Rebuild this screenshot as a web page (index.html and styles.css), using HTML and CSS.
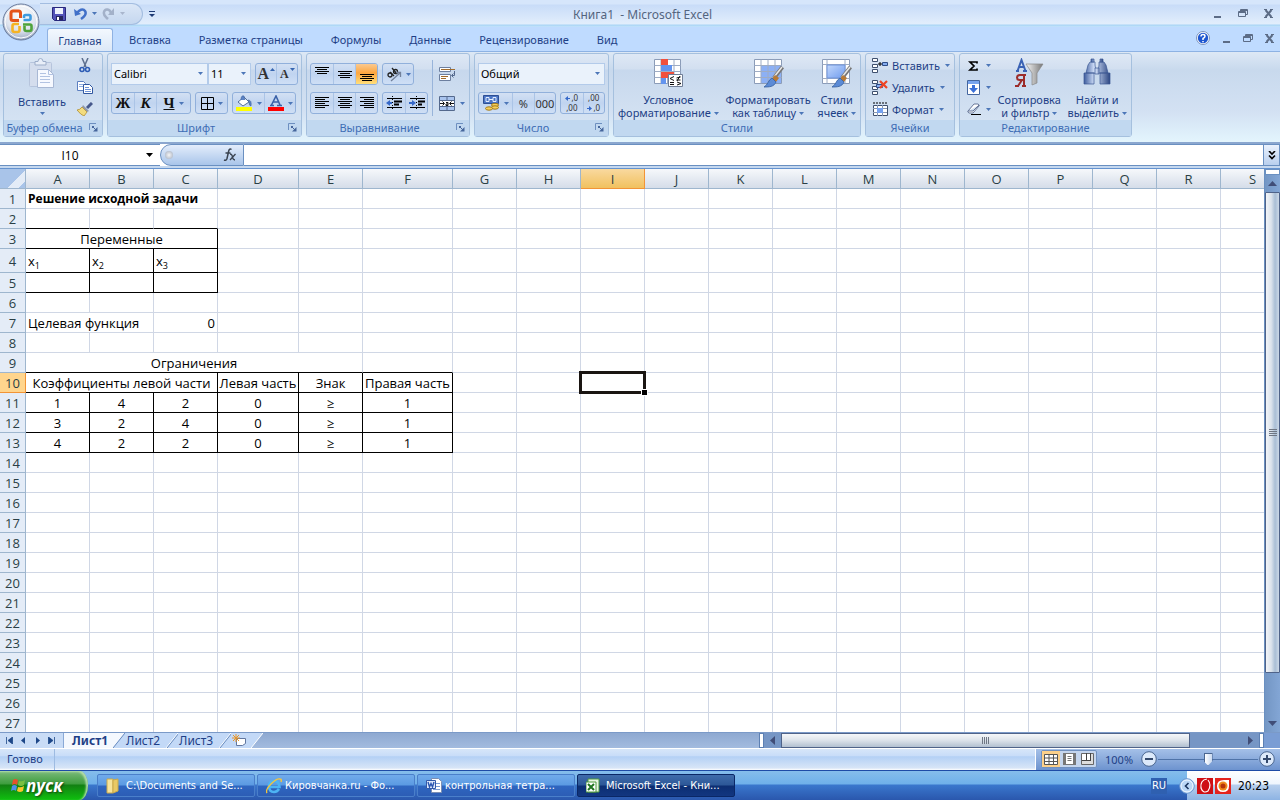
FILE: index.html
```html
<!DOCTYPE html>
<html lang="ru">
<head>
<meta charset="utf-8">
<title>Книга1 - Microsoft Excel</title>
<link rel="stylesheet" href="styles.css">
</head>
<body>
<svg class="defs" aria-hidden="true">
  <defs>
    <linearGradient id="g-blue" x1="0" y1="0" x2="1" y2="1"><stop offset="0" stop-color="#c3d8fb"/><stop offset="1" stop-color="#6f9cf0"/></linearGradient>
    <linearGradient id="g-metal" x1="0" y1="0" x2="1" y2="0"><stop offset="0" stop-color="#f4f4f4"/><stop offset="1" stop-color="#777"/></linearGradient>
    <linearGradient id="g-bino" x1="0" y1="0" x2="1" y2="0"><stop offset="0" stop-color="#3d5c9d"/><stop offset=".4" stop-color="#d3e1fa"/><stop offset="1" stop-color="#2c4682"/></linearGradient>
    <radialGradient id="g-orb" cx=".5" cy=".3" r=".75"><stop offset="0" stop-color="#fff"/><stop offset=".6" stop-color="#dde3ee"/><stop offset="1" stop-color="#8b9bb7"/></radialGradient>
    <symbol id="dd" viewBox="0 0 5 3"><path d="M0 0h5L2.500 3z"/></symbol>
    <symbol id="launch" viewBox="0 0 9 9"><path d="M.5 7V.5H7" fill="none" stroke="#6d8fc0"/><path d="M4 4l3 3" fill="none" stroke="#46669c"/><path d="M8.500 4v4.500H4zM3 3h2v2H3z" fill="#46669c"/></symbol>
    <symbol id="brush" viewBox="0 0 20 22"><path d="M18.500 1L10 12" stroke="#777" stroke-width="4"/><path d="M18 1L10 11" stroke="#e8e8e8" stroke-width="1.500"/><path d="M11 9l4 3-3 4-4-3z" fill="#b87a35"/><path d="M8 12l4 4c-2 5-7 5-12 5 4-2 4-7 8-9z" fill="#5c8bd6" stroke="#365f9e" stroke-width=".8"/></symbol>
    <symbol id="restore" viewBox="0 0 10 9"><path d="M2.500 2.500V.5h7v5h-2M.5 2.500h7v5h-7zM.5 3.500h7M2.500 1.500h7" fill="none" stroke="currentColor"/></symbol>
    <symbol id="close" viewBox="0 0 9 9"><path d="M0 .5h3M6 .5h3M0 8.500h3M6 8.500h3" stroke="currentColor"/><path d="M1.500 1l6 7M7.500 1l-6 7" stroke="currentColor" stroke-width="2"/></symbol>
  </defs>
</svg>

<header class="titlebar">
  <div class="quick">
    <button class="orb" aria-label="Office">
      <svg width="38" height="38" viewBox="0 0 38 38"><circle cx="19" cy="19" r="18" fill="url(#g-orb)" stroke="#67799b"/><circle cx="19" cy="19" r="16" fill="none" stroke="#fff"/>
      <g fill="none" stroke-width="2.600"><path d="M17 17.500h-6q-2 0-2-2V10q0-2 2-2h5.500q2 0 2 2v5" stroke="#e4541b" stroke-width="3"/><path d="M21.500 17H27q1.500 0 1.500-1.500v-2q0-1.500-1.500-1.500h-3.500q-1.500 0-1.500 1.500V15" stroke="#3f9be0"/><path d="M17 21h-4.500q-2 0-2 2v4q0 2 2 2h3q2 0 2-2v-4" stroke="#f5b324"/><path d="M21 21.500h7q1.500 0 1.500 1.500v3q0 2-2 2h-3q-2 0-2-2v-3" stroke="#4fa33a"/></g></svg>
    </button>
    <div class="quickbar">
      <button class="ic" aria-label="Сохранить"><svg width="14" height="14"><path d="M.5.500h13v13h-11l-2-2z" fill="#5353b8" stroke="#28287c"/><path d="M3 1h8v6H3z" fill="#eef3fd"/><path d="M4 9h7v4H4z" fill="#26265e"/><path d="M5 10h2v3H5z" fill="#fff"/></svg></button>
      <button class="ic" aria-label="Отменить"><svg width="13" height="13"><path d="M3 6C5 3 9 1 11 4s-1 6-4 8" fill="none" stroke="#4170c8" stroke-width="2.500"/><path d="M0 2l1 7 6-2z" fill="#4170c8"/></svg></button>
      <svg class="dd" width="5" height="3"><use href="#dd"/></svg>
      <button class="ic" aria-label="Повторить"><svg width="13" height="13"><path d="M9 6C8 2 3 1 2 5s2 5 4 7" fill="none" stroke="#a3b1c9" stroke-width="2.500"/><path d="M12 1v7H6z" fill="#a3b1c9"/></svg></button>
      <svg class="dd off" width="5" height="3"><use href="#dd"/></svg>
    </div>
    <button class="ic more" aria-label="Настройка"><svg width="6" height="6"><path d="M0 .5h6" stroke="#1d3b75"/><path d="M0 3h6L3 6z" fill="#1d3b75"/></svg></button>
  </div>
  <h1 class="title">Книга1  - Microsoft Excel</h1>
  <div class="winbtns">
    <button class="ic" aria-label="Свернуть"><svg width="9" height="9"><path d="M1 8h7" stroke="currentColor" stroke-width="2"/></svg></button>
    <button class="ic" aria-label="Восстановить"><svg width="10" height="9"><use href="#restore"/></svg></button>
    <button class="ic" aria-label="Закрыть"><svg width="9" height="9"><use href="#close"/></svg></button>
  </div>
</header>

<nav class="tabs">
  <button class="tab active">Главная</button>
  <button class="tab">Вставка</button>
  <button class="tab">Разметка страницы</button>
  <button class="tab">Формулы</button>
  <button class="tab">Данные</button>
  <button class="tab">Рецензирование</button>
  <button class="tab">Вид</button>
  <div class="winbtns book">
    <button class="help" aria-label="Справка"><svg width="14" height="14"><circle cx="7" cy="7" r="6.500" fill="#fff" stroke="#7c93bd"/><circle cx="7" cy="7" r="5.200" fill="#1f57d0"/><path d="M5 5.500q0-2 2-2t2 1.700Q9 6.500 7 7.500V9M7 10v1.200" fill="none" stroke="#fff" stroke-width="1.500"/></svg></button>
    <button class="ic" aria-label="Свернуть книгу"><svg width="9" height="9"><path d="M1 8h7" stroke="currentColor" stroke-width="2"/></svg></button>
    <button class="ic" aria-label="Восстановить книгу"><svg width="10" height="9"><use href="#restore"/></svg></button>
    <button class="ic" aria-label="Закрыть книгу"><svg width="9" height="9"><use href="#close"/></svg></button>
  </div>
</nav>

<main class="ribbon">
  <section class="group g-clip">
    <div class="gbody">
      <button class="big"><svg width="28" height="32"><rect x="1.500" y="4.500" width="22" height="24" rx="1" fill="#d4dded" stroke="#b6c4dc"/><path d="M7 7V3.500h3q0-3 2.500-3t2.500 3h3V7z" fill="#e8eef8" stroke="#9cadc9"/><path d="M9.500 11.500h11l5 5v13h-16z" fill="#f6f9ff" stroke="#a8b8d4"/><path d="M20.500 11.500v5h5M12 15.500h6M12 18.500h10M12 21.500h10M12 24.500h10" fill="none" stroke="#b2c3e2"/></svg><span>Вставить</span><svg class="dd" width="5" height="3"><use href="#dd"/></svg></button>
      <div class="stack">
        <button class="ic" aria-label="Вырезать"><svg width="12" height="16"><path d="M3 0l4 9M9 0L5 9" stroke="#5d6f8e" stroke-width="1.500"/><circle cx="3" cy="11.500" r="2" fill="none" stroke="#2d5cb5" stroke-width="1.600"/><circle cx="8.500" cy="11.500" r="2" fill="none" stroke="#2d5cb5" stroke-width="1.600"/></svg></button>
        <button class="ic" aria-label="Копировать"><svg width="16" height="14"><path d="M.5.500h6l2 2v7h-8z" fill="#fff" stroke="#5c7fc0"/><path d="M2 3.500h4M2 5.500h4" stroke="#8eaee4"/><path d="M6.500 3.500h6l3 3v6h-9z" fill="#fff" stroke="#31579f"/><path d="M8 6.500h4M8 8.500h6M8 10.500h6" stroke="#6d93d8"/></svg></button>
        <button class="ic" aria-label="Формат по образцу"><svg width="16" height="14"><path d="M15 1l-5 5" stroke="#46588b" stroke-width="3"/><path d="M6 3l6 6-2 1-5-5z" fill="#8f99ae"/><path d="M5 5l5 5-3 4q-3-1-7-6 3 0 5-3z" fill="#f3dc7f" stroke="#b08f36" stroke-width=".8"/></svg></button>
      </div>
    </div>
    <footer class="glabel"><span>Буфер обмена</span><button class="launch" aria-label="Буфер обмена: открыть окно"><svg width="9" height="9"><use href="#launch"/></svg></button></footer>
  </section>

  <section class="group g-font">
    <div class="gbody rows">
      <div class="row">
        <div class="combos">
          <label class="combo w-font"><select aria-label="Шрифт"><option>Calibri</option></select><svg class="dd" width="5" height="3"><use href="#dd"/></svg></label>
          <label class="combo w-size"><select aria-label="Размер шрифта"><option>11</option></select><svg class="dd" width="5" height="3"><use href="#dd"/></svg></label>
        </div>
        <div class="bar"><button class="b serif big-a">A<svg width="5" height="3"><path d="M0 3h5L2.500 0z" fill="#3766b0"/></svg></button><button class="b serif small-a">A<svg width="5" height="3"><path d="M0 0h5L2.500 3z" fill="#3766b0"/></svg></button></div>
      </div>
      <div class="row">
        <div class="bar"><button class="b serif">Ж</button><button class="b serif it">К</button><button class="b serif wide"><u>Ч</u><svg class="dd" width="5" height="3"><use href="#dd"/></svg></button></div>
        <div class="bar"><button class="b borders" aria-label="Границы"><svg width="13" height="13"><path d="M.5.500h12v12H.5zM6.500.5v12M.5 6.500h12" fill="none" stroke="#000"/></svg><svg class="dd" width="5" height="3"><use href="#dd"/></svg></button></div>
        <div class="bar"><button class="b borders" aria-label="Цвет заливки"><svg width="17" height="16"><path d="M2 7l6-5 5 5-6 4z" fill="#fff" stroke="#55709c"/><path d="M5 5q0-5 3-4l1 4M12 5q4 0 3 6-2 0-2-4z" fill="#5c83c6" stroke="#42649c" stroke-width=".6"/><path d="M0 12h16v4H0z" fill="#ff0"/></svg><svg class="dd" width="5" height="3"><use href="#dd"/></svg></button><button class="b borders" aria-label="Цвет текста"><svg width="16" height="16"><path d="M2 10.500h4M9 10.500h5M3.500 10L8 1l4 9M5.500 7h5" fill="none" stroke="#3b62a8" stroke-width="1.600"/><path d="M0 12h16v4H0z" fill="#f00"/></svg><svg class="dd" width="5" height="3"><use href="#dd"/></svg></button></div>
      </div>
    </div>
    <footer class="glabel"><span>Шрифт</span><button class="launch" aria-label="Шрифт: открыть окно"><svg width="9" height="9"><use href="#launch"/></svg></button></footer>
  </section>

  <section class="group g-align">
    <div class="gbody cols">
      <div class="rows">
        <div class="row">
          <div class="bar"><button class="b" aria-label="По верхнему краю"><svg width="14" height="16"><path d="M0 1.500h14M2 3.500h10M0 5.500h14M2 7.500h10" stroke="#000"/></svg></button><button class="b" aria-label="По середине"><svg width="14" height="16"><path d="M0 5.500h14M2 7.500h10M0 9.500h14M2 11.500h10" stroke="#000"/></svg></button><button class="b on" aria-label="По нижнему краю"><svg width="14" height="16"><path d="M0 8.500h14M2 10.500h10M0 12.500h14M2 14.500h10" stroke="#000"/></svg></button></div>
          <div class="bar"><button class="b orient" aria-label="Ориентация"><svg width="16" height="15"><g fill="none" stroke="#222" stroke-width="1.300"><circle cx="4" cy="8" r="2"/><path d="M4 5l4 4"/><path d="M6 1l5 6"/><circle cx="9.500" cy="4.500" r="2"/></g><path d="M5 14l9-8M14.500 10V5.500H10" fill="none" stroke="#72809a" stroke-width="1.300"/></svg><svg class="dd" width="5" height="3"><use href="#dd"/></svg></button></div>
        </div>
        <div class="row">
          <div class="bar"><button class="b" aria-label="По левому краю"><svg width="14" height="12"><path d="M0 .5h14M0 2.500h10M0 4.500h14M0 6.500h10M0 8.500h14M0 10.500h10" stroke="#000"/></svg></button><button class="b" aria-label="По центру"><svg width="14" height="12"><path d="M0 .5h14M2 2.500h10M0 4.500h14M2 6.500h10M0 8.500h14M2 10.500h10" stroke="#000"/></svg></button><button class="b" aria-label="По правому краю"><svg width="14" height="12"><path d="M0 .5h14M4 2.500h10M0 4.500h14M4 6.500h10M0 8.500h14M4 10.500h10" stroke="#000"/></svg></button></div>
          <div class="bar"><button class="b" aria-label="Уменьшить отступ"><svg width="16" height="15"><path d="M1 2.500h15M1 11.500h15" stroke="#000"/><path d="M8 5.500h8M8 8.500h5" stroke="#000" stroke-width="2"/><path d="M6.500 0v15" stroke="#000" stroke-dasharray="1 2"/><path d="M4 4v6L0 7z" fill="#3568c9"/><path d="M3 7h3" stroke="#3568c9" stroke-width="2"/></svg></button><button class="b" aria-label="Увеличить отступ"><svg width="16" height="15"><path d="M1 2.500h15M1 11.500h15" stroke="#000"/><path d="M9 5.500h7M9 8.500h4" stroke="#000" stroke-width="2"/><path d="M7.500 0v15" stroke="#000" stroke-dasharray="1 2"/><path d="M3 4v6l4-3z" fill="#3568c9"/><path d="M0 7h4" stroke="#3568c9" stroke-width="2"/></svg></button></div>
        </div>
      </div>
      <div class="rows vline">
        <button class="ic flat" aria-label="Перенос текста"><svg width="17" height="16"><path d="M.5 1.500h11v4H.5zM.5 8.500h11v6H.5z" fill="#fff" stroke="#6c7f9f"/><path d="M2 3.500h14M2 10.500h7M2 12.500h5" stroke="#a26c2c"/><path d="M15.500 5v4.500H13m1.500-2L12.500 9.500l2 2" fill="none" stroke="#54698d"/></svg></button>
        <button class="ic flat" aria-label="Объединить и поместить в центре"><svg width="17" height="15"><path d="M.5.500h15v14H.5z" fill="#fff" stroke="#54698d"/><path d="M1 1h14v3H1zM1 11h14v3H1z" fill="#a9c4ee"/><path d="M.5 4.500h15M.5 10.500h15M8 .5v4M8 10.500v4" stroke="#54698d"/><path d="M1 7.500h4M11 7.500h4M3.500 5.500l2 2-2 2M12.500 5.500l-2 2 2 2M7 6.500h2v3H7V8h2" fill="none" stroke="#111"/></svg><svg class="dd" width="5" height="3"><use href="#dd"/></svg></button>
      </div>
    </div>
    <footer class="glabel"><span>Выравнивание</span><button class="launch" aria-label="Выравнивание: открыть окно"><svg width="9" height="9"><use href="#launch"/></svg></button></footer>
  </section>

  <section class="group g-num">
    <div class="gbody rows">
      <div class="row"><label class="combo grow"><select aria-label="Числовой формат"><option>Общий</option></select><svg class="dd" width="5" height="3"><use href="#dd"/></svg></label></div>
      <div class="row">
        <div class="bar"><button class="b money" aria-label="Финансовый формат"><svg width="17" height="16"><path d="M.5.500h15v8H.5z" fill="#4a74c4" stroke="#2d4e94"/><path d="M3 2.500h3v4H3zM10 2.500h3v4h-3zM6 4.500h4" fill="none" stroke="#e2ecff"/><ellipse cx="12" cy="10" rx="3.500" ry="1.700" fill="#f6cf5c" stroke="#a37a17"/><ellipse cx="12" cy="12.500" rx="3.500" ry="1.700" fill="#f6cf5c" stroke="#a37a17"/><ellipse cx="6" cy="13.500" rx="3.500" ry="1.700" fill="#f6cf5c" stroke="#a37a17"/></svg><svg class="dd" width="5" height="3"><use href="#dd"/></svg></button><button class="b num">%</button><button class="b num">000</button></div>
        <div class="bar"><button class="b dec" aria-label="Увеличить разрядность"><span class="d"><svg width="5" height="5"><path d="M3 0v5L0 2.500z" fill="#3568c9"/><path d="M2 2.500h3" stroke="#3568c9"/></svg>,0</span><span class="d">,00</span></button><button class="b dec" aria-label="Уменьшить разрядность"><span class="d">,00</span><span class="d"><svg width="5" height="5"><path d="M2 0v5l3-2.500z" fill="#3568c9"/><path d="M0 2.500h3" stroke="#3568c9"/></svg>,0</span></button></div>
      </div>
    </div>
    <footer class="glabel"><span>Число</span><button class="launch" aria-label="Число: открыть окно"><svg width="9" height="9"><use href="#launch"/></svg></button></footer>
  </section>

  <section class="group g-style">
    <div class="gbody bigs">
      <button class="big"><svg width="31" height="30"><path d="M1.500 1.500h26v24h-26z" fill="#fff" stroke="#8b9cb8"/><path d="M8 1.500v24M14.500 1.500v24M21 1.500v24M1.500 7.500h26M1.500 13.500h26M1.500 19.500h26" stroke="#9eacc4"/><path d="M8 1h7v6H8zM8 14h13v6H8z" fill="#f2503c"/><path d="M8 7h11v6H8zM8 20h5v6H8z" fill="#6394ee"/><path d="M15.500 16.500h14v12h-14z" fill="#fff" stroke="#6f7d95"/><path d="M21 18.500l-4 2 4 2M17 24.500h4M17 26.500h4M23.500 20l4-1M23.500 22h4M24 24l4 1.500-4 1.500M24 23l3-5" fill="none" stroke="#111"/></svg><span>Условное</span><span>форматирование <svg class="dd" width="5" height="3"><use href="#dd"/></svg></span></button>
      <button class="big"><svg width="31" height="30"><path d="M1.500 1.500h27v24h-27z" fill="#fff" stroke="#8b9cb8"/><path d="M8 8h20v17H8z" fill="#8cb0f5"/><path d="M8 1.500v24M15 1.500v24M22 1.500v24M1.500 7.500h27M1.500 13.500h27M1.500 19.500h27" stroke="#9eacc4"/><use href="#brush" x="11" y="8" width="20" height="22"/></svg><span>Форматировать</span><span>как таблицу <svg class="dd" width="5" height="3"><use href="#dd"/></svg></span></button>
      <button class="big"><svg width="31" height="30"><path d="M1.500 1.500h27v24h-27z" fill="#fff" stroke="#8b9cb8"/><path d="M6 1.500v24M24 1.500v24M1.500 6.500h27M1.500 20.500h27" stroke="#9eacc4"/><path d="M6 7h18v13H6z" fill="url(#g-blue)" stroke="#6e93d9"/><use href="#brush" x="11" y="8" width="20" height="22"/></svg><span>Стили</span><span>ячеек <svg class="dd" width="5" height="3"><use href="#dd"/></svg></span></button>
    </div>
    <footer class="glabel"><span>Стили</span></footer>
  </section>

  <section class="group g-cells">
    <div class="gbody list">
      <button class="item"><svg width="17" height="15"><path d="M.5.500h5v3h-5zM.5 6.500h5v3h-5zM.5 11.500h5v3h-5z" fill="#fff" stroke="#3f506e"/><path d="M10.500 4.500h5v3h-5z" fill="#86acee" stroke="#2e4c86"/><path d="M6 6h4M8 4v4" stroke="#000"/></svg><span>Вставить</span><svg class="dd" width="5" height="3"><use href="#dd"/></svg></button>
      <button class="item"><svg width="17" height="15"><path d="M.5.500h5v3h-5zM.5 11.500h5v3h-5zM.5 6.500h5v3h-5z" fill="#fff" stroke="#3f506e"/><path d="M4.500 4.500h6v3h-6z" fill="#86acee" stroke="#2e4c86"/><path d="M8 1l7 7M15 1L8 8" stroke="#ee4423" stroke-width="2.200"/></svg><span>Удалить</span><svg class="dd" width="5" height="3"><use href="#dd"/></svg></button>
      <button class="item"><svg width="17" height="15"><path d="M1.500 3.500h14v10h-14z" fill="#fff" stroke="#3f506e"/><path d="M5.500 3v11M10.500 3v11M1 6.500h14M1 10.500h14" stroke="#8696b1"/><path d="M5 6h6v5H5z" fill="#76a2f0"/><path d="M1 1h14" stroke="#000" stroke-dasharray="2 1"/></svg><span>Формат</span><svg class="dd" width="5" height="3"><use href="#dd"/></svg></button>
    </div>
    <footer class="glabel"><span>Ячейки</span></footer>
  </section>

  <section class="group g-edit">
    <div class="gbody bigs">
      <div class="list">
        <button class="item" aria-label="Сумма"><svg width="14" height="12"><path d="M10 3.500V2H3l4 4-4 4h7V8.500" fill="none" stroke="#000" stroke-width="1.700"/></svg><svg class="dd" width="5" height="3"><use href="#dd"/></svg></button>
        <button class="item" aria-label="Заполнить"><svg width="14" height="15"><path d="M.5.500h12v14H.5z" fill="#fff" stroke="#44669f"/><path d="M1 1h11v3H1z" fill="#79a5ee"/><path d="M5 5h3v3h3l-4.500 5L2 8h3z" fill="#3b70d8"/></svg><svg class="dd" width="5" height="3"><use href="#dd"/></svg></button>
        <button class="item" aria-label="Очистить"><svg width="14" height="12"><path d="M1 8l6-7h4q2 1 1 2l-6 7H2q-2-1-1-2zM1 8h5l6-6" fill="#fff" stroke="#68789a"/><path d="M4 11.500h10" stroke="#000"/></svg><svg class="dd" width="5" height="3"><use href="#dd"/></svg></button>
      </div>
      <button class="big"><svg width="30" height="30"><path d="M12 6h17l-6 9v10l-5 2V15z" fill="url(#g-metal)" stroke="#888" stroke-width=".7"/><path d="M2 13h3M9 13h4M3.500 13L7.500 2l4 11M5 9h5" fill="none" stroke="#3a62b4" stroke-width="2"/><path d="M12 17H6q-3 0-3 2.500T6 22h4M10 17v11M8 22l-4 6M1 28h4M8 28h4" fill="none" stroke="#9c2c2a" stroke-width="2"/></svg><span>Сортировка</span><span>и фильтр <svg class="dd" width="5" height="3"><use href="#dd"/></svg></span></button>
      <button class="big"><svg width="28" height="30"><g fill="url(#g-bino)" stroke="#3b5794" stroke-width=".7"><path d="M7 4h5v3l1 8H3l2-8zM16 4h5l2 3 2 8H15l1-8zM1 15h10v11H1zM17 15h10v11H17z"/><path d="M8 1h3v3H8zM17 1h3v3h-3zM12 10h4v6h-4z"/></g></svg><span>Найти и</span><span>выделить <svg class="dd" width="5" height="3"><use href="#dd"/></svg></span></button>
    </div>
    <footer class="glabel"><span>Редактирование</span></footer>
  </section>
</main>

<div class="formula">
  <label class="namebox"><input aria-label="Имя ячейки" value="I10"><svg width="7" height="4"><path d="M0 0h7L3.500 4z"/></svg></label>
  <div class="fx"><i class="knob"></i><button class="fxbtn" aria-label="Вставить функцию"><svg width="14" height="14" viewBox="0 0 14 14"><path d="M8.500 1.500Q6.500 0 5.700 3L4 10.500Q3.300 13 1 12M2.500 5h5" fill="none" stroke="#3a4350" stroke-width="1.500"/><path d="M7 6q2 0 2.500 3t2.500 3M12.500 6L7 12" fill="none" stroke="#3a4350" stroke-width="1.300"/></svg></button></div>
  <input class="fline" aria-label="Строка формул">
  <button class="expand" aria-label="Развернуть"><svg width="8" height="9"><path d="M1 0l3 3 3-3M1 4.500l3 3 3-3" fill="none" stroke="#000" stroke-width="1.600"/></svg></button>
</div>

<div class="work">
  <div class="sheetwrap"><table class="sheet" id="sheet"></table></div>
  <div class="vscroll">
    <div class="split"></div>
    <button class="arrow" aria-label="Вверх"><svg width="9" height="5"><path d="M0 5h9L4.500 0z"/></svg></button>
    <div class="thumb"><svg width="8" height="8"><path d="M0 .5h8M0 2.500h8M0 4.500h8M0 6.500h8" stroke="#6f7784"/></svg></div>
    <div class="track"></div>
    <button class="arrow" aria-label="Вниз"><svg width="9" height="5"><path d="M0 0h9L4.500 5z"/></svg></button>
  </div>
</div>

<div class="bottom">
  <div class="sheets">
    <div class="navs">
      <button class="ic" aria-label="Первый лист"><svg width="7" height="7"><path d="M.5 0v7M6.500 0v7L2 3.500z" fill="#1d4788" stroke="#1d4788" stroke-width=".8"/></svg></button>
      <button class="ic" aria-label="Предыдущий лист"><svg width="7" height="7"><path d="M5 0v7L1 3.500z" fill="#1d4788"/></svg></button>
      <button class="ic" aria-label="Следующий лист"><svg width="7" height="7"><path d="M2 0v7l4-3.500z" fill="#1d4788"/></svg></button>
      <button class="ic" aria-label="Последний лист"><svg width="7" height="7"><path d="M6.500 0v7M.5 0v7L5 3.500z" fill="#1d4788" stroke="#1d4788" stroke-width=".8"/></svg></button>
    </div>
    <button class="stab sel">Лист1</button><svg class="slant" width="12" height="15"><path d="M0 0h12L0 15z" fill="#f4f8fe"/><path d="M12 0L0 15h12z" fill="#c3d9f7"/><path d="M12 0L0 15" stroke="#6a8cbf"/></svg>
    <button class="stab">Лист2</button><svg class="slant" width="12" height="15"><path d="M0 0h12v15H0z" fill="#c3d9f7"/><path d="M12 0L0 15" stroke="#fff"/><path d="M13 0L1 15" stroke="#6a8cbf"/></svg>
    <button class="stab">Лист3</button><svg class="slant" width="12" height="15"><path d="M0 0h12v15H0z" fill="#c3d9f7"/><path d="M12 0L0 15" stroke="#fff"/><path d="M13 0L1 15" stroke="#6a8cbf"/></svg>
    <button class="stab new" aria-label="Вставить лист"><svg width="16" height="13"><path d="M4.500 4.500h9v5l-3 2h-6z" fill="#fff" stroke="#6177a0"/><path d="M4 0v8M0 4h8M1 1l6 6M7 1L1 7" stroke="#e8962a"/></svg></button><svg class="slant" width="12" height="15"><path d="M0 0h12L0 15z" fill="#c3d9f7"/><path d="M12 0L0 15" stroke="#fff"/></svg>
  </div>
  <div class="hscroll">
    <div class="vsplit"></div>
    <button class="harrow" aria-label="Влево"><svg width="5" height="9"><path d="M5 0v9L0 4.500z"/></svg></button>
    <div class="hthumb"><svg width="8" height="7"><path d="M.5 0v7M2.500 0v7M4.500 0v7M6.500 0v7" stroke="#6f7784"/></svg></div>
    <div class="htrack"></div>
    <button class="harrow" aria-label="Вправо"><svg width="5" height="9"><path d="M0 0v9l5-4.500z"/></svg></button>
    <div class="vsplit"></div>
    <div class="corner"></div>
  </div>
</div>

<div class="status">
  <span class="ready">Готово</span>
  <div class="views">
    <div class="vbtns">
      <button class="on" aria-label="Обычный"><svg width="14" height="11"><path d="M.5.500h13v10H.5zM5 .5v10M9.500.5v10M.5 4h13M.5 7.500h13" fill="#fff" stroke="#555"/></svg></button>
      <button aria-label="Разметка страницы"><svg width="13" height="12"><path d="M0 0h13v12H0z" fill="#777"/><path d="M3 1h7v10H3z" fill="#fff"/><path d="M4.500 3.500h4M4.500 5.500h4M4.500 7.500h4" stroke="#777"/></svg></button>
      <button aria-label="Страничный режим"><svg width="13" height="12"><path d="M.5.500h12v11H.5z" fill="#ddd" stroke="#666"/><path d="M1 1h4v6H1zM6 1h3v6H6z" fill="#fff"/><path d="M5.500 0v7M9.500 0v7M1 7.500h9" stroke="#444"/></svg></button>
    </div>
    <span class="pct">100%</span>
    <button class="ic" aria-label="Уменьшить"><svg width="16" height="16"><circle cx="8" cy="8" r="7.300" fill="#dce9fa" stroke="#4a6690"/><path d="M4 8h8" stroke="#34496c" stroke-width="2"/></svg></button>
    <input class="zoom" type="range" aria-label="Масштаб" min="0" max="100" value="50">
    <button class="ic" aria-label="Увеличить"><svg width="16" height="16"><circle cx="8" cy="8" r="7.300" fill="#dce9fa" stroke="#4a6690"/><path d="M4 8h8M8 4v8" stroke="#34496c" stroke-width="2"/></svg></button>
  </div>
</div>

<footer class="taskbar">
  <button class="start"><svg width="14" height="15"><path d="M2 2q2-2 5 0L6 7Q4 5 1 7z" fill="#e8502b"/><path d="M8 3q3 1 6-1l-1 5q-3 2-6 0z" fill="#7ac142"/><path d="M1 8q2-2 5 0l-1 5q-2-2-5 0z" fill="#4f8fe8"/><path d="M7 9q3 1 6-1l-1 5q-3 2-6 0z" fill="#fbc62c"/></svg>пуск</button>
  <div class="tasks">
    <button class="task"><svg width="14" height="16"><path d="M1 1h6v14H1z" fill="#f7e49c" stroke="#c9a94b"/><path d="M7 2l5-1v12l-5 2z" fill="#e9c965" stroke="#c9a94b"/></svg><span>C:\Documents and Se...</span></button>
    <button class="task"><svg width="16" height="16"><path d="M13 11q-2 3-5 3-5 0-5-5.500T8 3q5 0 5.500 6H4" fill="none" stroke="#4db4f4" stroke-width="2.600"/><path d="M1 15Q-1 12 5 6t9-5q2 0 1 3" fill="none" stroke="#f3c53d" stroke-width="1.400"/></svg><span>Кировчанка.ru - Фо...</span></button>
    <button class="task"><svg width="16" height="16"><path d="M5.500.500h7l3 3v11h-10z" fill="#fff" stroke="#7b8eb3"/><path d="M10 5.500h4M10 8.500h4M7 11.500h7" stroke="#7a9bd4"/><path d="M.5 2.500h9v8h-9z" fill="#dfe9fb" stroke="#3359a8"/><path d="M2 4l1.500 5L5 5.500 6.500 9 8 4" fill="none" stroke="#2a55b0" stroke-width="1.400"/></svg><span>контрольная тетра...</span></button>
    <button class="task cur"><svg width="14" height="15"><path d="M2 1h11v13H2z" fill="#e9f5e4" stroke="#4e9a3c"/><path d="M0 4h10v10H0z" fill="#fff" stroke="#4e9a3c"/><path d="M2 6l6 6M8 6l-6 6" stroke="#227522" stroke-width="2"/></svg><span>Microsoft Excel - Кни...</span></button>
  </div>
  <span class="lang">RU</span>
  <div class="tray">
    <button class="ic hide" aria-label="Показать значки"><svg width="16" height="16"><circle cx="8" cy="8" r="7.300" fill="#bcd7f6" stroke="#6c96cf"/><circle cx="8" cy="8" r="6" fill="none" stroke="#f1f8ff"/><path d="M9.500 5L6.500 8l3 3" fill="none" stroke="#1b355f" stroke-width="1.600"/></svg></button>
    <svg width="16" height="16"><path d="M0 0h16v16H0z" fill="#cf0f14"/><path d="M10 1Q3 2 4 10q2 6 7 3 4-6 0-11" fill="none" stroke="#fff" stroke-width="1.200"/></svg>
    <svg width="16" height="16"><path d="M0 0h16v16H0z" fill="#e4231d"/><path d="M2 8q0-6 7-6h5v6q0 6-6 6T2 8z" fill="#fff"/><circle cx="8" cy="8" r="4.500" fill="#f08a1d"/><circle cx="8" cy="8" r="2.500" fill="#b4340c"/></svg>
    <time>20:23</time>
  </div>
</footer>
<script src="sheet.js"></script>
</body>
</html>
```
FILE: styles.css
```css
* { box-sizing: border-box; }
html, body { height: 100%; margin: 0; }
body {
  display: flex; flex-direction: column; overflow: hidden;
  font: 11px/13px "Noto Sans", "Open Sans", sans-serif;
  color: #1e3f86; background: #bfdbff;
}
button, input, select { font: inherit; color: inherit; margin: 0; }
button { border: 0; padding: 0; background: none; display: flex; align-items: center; justify-content: center; white-space: nowrap; }
svg { display: block; flex: none; }
.defs { position: absolute; width: 0; height: 0; }
.dd { fill: #4c76b8; display: inline-block; }
.dd.off { fill: #a9b6cd; }

.titlebar { height: 27px; flex: none; display: flex; align-items: center; background: linear-gradient(#d6e6fb 0 4px, #c8dcf8 5px, #e2eefc 24px, #a8d4f5 25px, #c6e4fb); }
.quick { display: flex; align-items: center; width: 160px; height: 27px; }
.orb { position: relative; z-index: 2; width: 38px; height: 38px; margin: 16px 0 0 2px; }
.quickbar { display: flex; align-items: center; gap: 5px; height: 22px; width: 103px; padding-left: 12px; border: 1px solid #a3bde0; border-left: 0; border-radius: 0 11px 11px 0; background: linear-gradient(#dbe7f7, #c5d7ef); }
.quickbar .ic + .ic { margin-left: 3px; }
.more { margin-left: 6px; }
.title { flex: 1; margin: 0; text-align: center; font-size: 12px; font-weight: 400; color: #54657f; white-space: pre; padding: 2px 80px 0 0; }
.winbtns { display: flex; align-items: center; gap: 16px; padding-right: 7px; color: #5c6c86; width: 75px; justify-content: flex-end; }

.tabs { height: 24px; flex: none; display: flex; align-items: center; padding: 1px 4px 0 47px; background: #bfdbff; }
.tab { height: 23px; padding: 0 14px; }
.tab.active { width: 66px; margin-right: 2px; padding: 0; border: 1px solid #8fb2e3; border-bottom: 0; border-radius: 3px 3px 0 0; background: linear-gradient(#f3f8fe, #dce8f7); }
.book { margin-left: auto; width: 80px; gap: 12px; padding: 0 2px 3px 0; }

.ribbon { flex: none; height: 91px; display: flex; gap: 4px; padding: 1px 3px 5px; border-top: 1px solid #8db2e3; background: linear-gradient(#dde8f5, #c8d9ed 18px, #d3e1f3 60px, #e3f5fd); }
.group { display: flex; flex-direction: column; border: 1px solid #a5c0de; border-radius: 3px; background: linear-gradient(#dee8f5, #d2dff0 15px, #c7d8ed 16px, #d8e5f4); }
.gbody { flex: 1; min-height: 0; display: flex; padding: 0 3px; }
.glabel { flex: none; height: 16px; position: relative; display: flex; align-items: center; justify-content: center; padding-bottom: 1px; color: #3e6db5; background: #c1d8f0; white-space: nowrap; }
.launch { position: absolute; right: 4px; top: 3px; }
.g-clip .glabel, .g-font .glabel, .g-align .glabel, .g-num .glabel { padding-right: 17px; }
.g-clip { width: 100px; }
.g-font { width: 195px; }
.g-align { width: 164px; }
.g-num { width: 135px; }
.g-style { width: 248px; }
.g-cells { width: 90px; }
.g-edit { width: 173px; }

.big { flex-direction: column; justify-content: flex-start; padding-top: 4px; line-height: 13px; }
.big > svg:first-child { margin-bottom: 5px; }
.g-clip .big { width: 70px; }
.g-clip .big .dd { margin-top: 4px; }
.big .dd { vertical-align: 2px; }
.stack { display: flex; flex-direction: column; justify-content: space-around; width: 16px; align-items: center; }
.rows { display: flex; flex-direction: column; gap: 7px; padding-top: 9px; }
.row { display: flex; gap: 4px; height: 22px; }
.combos { display: flex; }
.combo { position: relative; display: flex; align-items: center; }
.combo select { appearance: none; width: 100%; height: 22px; padding: 0 2px 1px; border: 1px solid #b3cbea; border-radius: 0; color: #000; background: #eaf2fb; }
.combo .dd { position: absolute; right: 5px; top: 9px; }
.w-font { width: 97px; }
.w-size { width: 43px; }
.grow { flex: 1; }
.bar { display: flex; border: 1px solid #91b0db; border-radius: 3px; background: linear-gradient(#d3e0f3, #c0d4f0 50%, #cfdff5); overflow: hidden; }
.b { width: 22px; gap: 4px; color: #111; }
.b + .b { border-left: 1px solid #abc4e6; }
.b.on { background: linear-gradient(#fbc98f, #fda63f 45%, #ffdf7b); }
.serif { font: bold 15px/18px "Liberation Serif", serif; }
.big-a { font-size: 16px; }
.small-a { font-size: 12px; }
.big-a, .small-a { gap: 1px; color: #333; }
.big-a svg, .small-a svg { align-self: flex-start; margin-top: 4px; }
.it { font-style: italic; }
.wide { width: 34px; }
.borders { width: 31px; }
.orient { width: 30px; }
.money { width: 34px; }
.num { color: #333; }
.dec { flex-direction: column; gap: 0; color: #333; }
.d { display: flex; align-items: center; gap: 1px; height: 10px; font-size: 8px; line-height: 10px; }
.cols { gap: 4px; }
.vline { border-left: 1px solid #98b4da; margin: 6px 0 4px; padding: 3px 0 0 6px; }
.flat { height: 22px; gap: 4px; justify-content: flex-start; }
.bigs { gap: 4px; justify-content: space-between; padding: 0 4px; }
.list { display: flex; flex-direction: column; padding-top: 1px; }
.g-cells .list { padding-left: 6px; }
.item { height: 22px; gap: 3px; justify-content: flex-start; }
.item span + .dd { margin-left: 2px; }
.g-edit .item { gap: 5px; padding-left: 3px; }

.formula { flex: none; height: 26px; display: flex; border-top: 2px solid #8ba7cf; border-bottom: 2px solid #c5d8ef; background: #fff; }
.namebox { flex: none; width: 160px; display: flex; align-items: center; border-top: 1px solid #6a90c1; border-bottom: 1px solid #6a90c1; padding-right: 7px; }
.namebox input { width: 146px; border: 0; padding: 0 6px 0 0; background: none; text-align: center; color: #000; font: 12px/16px "Open Sans", sans-serif; height: 18px; outline: 0; }
.fx { flex: none; width: 84px; display: flex; align-items: center; justify-content: space-between; padding: 0 6px 0 4px; border: 1px solid #6a90c1; border-radius: 11px 0 0 11px; background: linear-gradient(#e3edfb, #a9c5ea); }
.knob { width: 8px; height: 8px; border-radius: 4px; background: radial-gradient(#f5f5f5, #a0abbd); }
.fline { flex: 1; min-width: 0; border: 1px solid #6a90c1; border-left: 0; background: #fff; outline: 0; }
.expand { flex: none; width: 16px; border: 1px solid #6a90c1; border-left: 0; background: linear-gradient(#eaf2fd, #b8cfee); }

.work { flex: 1; min-height: 0; display: flex; border-top: 1px solid #6593cf; }
.sheetwrap { flex: 1; min-width: 0; overflow: hidden; background: #fff; }
.sheet { table-layout: fixed; width: 0; border-collapse: separate; border-spacing: 0; font: 13px/18px "Open Sans", "Noto Sans", sans-serif; color: #000; }
.sheet th { font-weight: 400; color: #2a3f45; padding: 0; height: 20px; border-right: 1px solid #9eb6ce; border-bottom: 1px solid #9eb6ce; }
.sheet thead th { background: linear-gradient(#f6f8fb, #d5dde9); }
.sheet tbody th { background: #e4ecf7; }
.sheet thead th:first-child { background: linear-gradient(135deg, #a9c4e9 0 60%, #e4ecf7 60% 85%, #a9c4e9 85%); }
.sheet th.hot, .sheet thead th.hot { background: linear-gradient(#f9d99f, #f1c15f); border-color: #f29436; }
.sheet tbody th.hot { background: #ffd58d; }
.sheet td { position: relative; height: 20px; padding: 0 2px; border-right: 1px solid #d0d7e5; border-bottom: 1px solid #d0d7e5; text-align: left; white-space: nowrap; line-height: 16px; }
.sheet .tall > * { height: 24px; }
.sheet .tall td { padding-top: 2px; }
.sheet td.c { text-align: center; padding: 0; }
.sheet td.r { text-align: right; }
.sheet td.k { border-color: #000; }
.sheet td.kb { border-bottom-color: #000; }
.sheet td.bold { font-size: 12px; font-weight: 700; }
.sheet sub { font-size: 9px; line-height: 9px; vertical-align: -3px; }
.cursor { position: absolute; z-index: 3; inset: -2px; border: 3px solid #1a1512; pointer-events: none; }
.cursor::after { content: ""; position: absolute; right: -4px; bottom: -4px; width: 5px; height: 5px; background: #000; outline: 1px solid #fff; }

.vscroll { flex: none; width: 16px; display: flex; flex-direction: column; border-left: 1px solid #6a90c1; background: linear-gradient(90deg, #7396c4, #83a6d5); }
.split { height: 6px; border: 1px solid #6a90c1; background: #fff; }
.arrow { height: 17px; fill: #404d77; }
.thumb { flex: 482 1 0; display: flex; align-items: center; justify-content: center; border: 1px solid #4f6389; border-radius: 1px; background: linear-gradient(90deg, #f3f5f8, #dbe3ec 40%, #a9bed5 70%, #cbd8e7); }
.track { flex: 42 1 0; }

.bottom { flex: none; height: 16px; display: flex; border-top: 1px solid #7b9ac8; background: linear-gradient(#8ea9d1, #a3bbdf); }
.sheets { flex: 759 1 0; display: flex; min-width: 0; }
.navs { width: 64px; display: flex; align-items: center; gap: 7px; padding-left: 6px; background: #c9dcf6; border-right: 1px solid #8aa9d6; }
.stab { justify-content: flex-start; padding: 0 0 0 1px; width: 41px; background: #c3d9f7; font-size: 12px; }
.stab.sel { width: 49px; padding-left: 8px; background: #f4f8fe; font-weight: 700; }
.stab.new { width: 20px; }
.hscroll { flex: 521 1 0; display: flex; background: #7696c5; }
.vsplit { width: 5px; border: 1px solid #5d80b3; background: #fff; }
.harrow { width: 17px; fill: #404d77; }
.hthumb { flex: 408 1 0; display: flex; align-items: center; justify-content: center; border: 1px solid #4f6389; background: linear-gradient(#f5f7f9, #dfe5ec 45%, #b2c0d0); }
.htrack { flex: 52 1 0; }
.corner { width: 16px; background: #7a9dd4; }

.status { flex: none; height: 22px; display: flex; justify-content: space-between; border-top: 1px solid #fff; background: linear-gradient(#d7e6f9, #c7dcf8 35%, #b3d0f5 36%, #d7e5f7 90%, #fff); }
.ready { width: 55px; display: flex; align-items: center; padding: 0 0 2px 7px; border-right: 1px solid #9dbbe2; }
.views { display: flex; align-items: center; gap: 1px; width: 245px; border-left: 1px solid #fff; padding: 0 5px 1px; background: linear-gradient(#a4c0e8, #87a8da 55%, #6d93cf); }
.vbtns { display: flex; border: 1px solid #7090bf; border-radius: 2px; background: #c5d6ee; }
.vbtns button { width: 18px; height: 16px; }
.vbtns .on { background: #fcd08a; }
.pct { margin: 0 7px; }
.zoom { appearance: none; flex: 1; min-width: 0; height: 16px; background: linear-gradient(#4f73a8, #4f73a8) center/100% 1px no-repeat; }
.zoom::-webkit-slider-thumb { appearance: none; width: 9px; height: 13px; border: 1px solid #4a6690; background: linear-gradient(90deg, #fff, #c9d9ef); clip-path: polygon(0 0, 100% 0, 100% 65%, 50% 100%, 0 65%); }

.taskbar { flex: none; height: 30px; display: flex; align-items: center; color: #fff; font: 11px/14px "DejaVu Sans Condensed", "Noto Sans", sans-serif; border-top: 1px solid #1e4ba6; background: linear-gradient(#85bdeb, #6fb0ea 13px, #3a77cd 14px, #2a57ad); }
.start { width: 88px; height: 29px; justify-content: flex-start; gap: 1px; padding-left: 11px; font: italic bold 17px/20px "Open Sans", sans-serif; text-shadow: 1px 1px 2px #14420f; border-radius: 0 9px 9px 0 / 0 15px 15px 0; background: linear-gradient(#7cba7c, #3d9d3d 13px, #128012 14px, #0fc00f); box-shadow: inset -2px 1px 2px #b3dcab; }
.tasks { display: flex; gap: 2px; padding-left: 9px; flex: 1; }
.task { width: 158px; height: 23px; padding-left: 8px; justify-content: flex-start; gap: 3px; border: 1px solid #4a7fca; border-radius: 2px; background: linear-gradient(#71abeb, #5b9ae2 48%, #2f66c0 52%, #2c5db5); }
.task:first-child { gap: 6px; }
.cur { gap: 6px; border-color: #0a2766; background: linear-gradient(#3f6cab, #2c5797 48%, #0c2e72 52%, #123680); }
.lang { padding: 1px 1px; margin-right: 12px; background: #2f60b0; }
.tray { display: flex; align-items: center; gap: 2px; height: 29px; width: 101px; color: #000; background: linear-gradient(#fff, #eef5fd 13px, #b7cfed 14px, #8db3e3) right/93px 100% no-repeat; }
.tray time { margin-left: 5px; font-size: 12px; }
```
FILE: sheet.js
```js
const widths = [26, 64, 64, 64, 81, 64, 90].concat(Array(13).fill(64));
const lastRow = 27;

// Cells per row: [text, class, colspan]; the rest of each row is filled with blanks.
const rows = {
  1: [["Решение исходной задачи", "bold", 3]],
  2: [["", "kb"], ["", "kb"], ["", "kb"]],
  3: [["Переменные", "c k", 3]],
  4: [["x<sub>1</sub>", "k"], ["x<sub>2</sub>", "k"], ["x<sub>3</sub>", "k"]],
  5: [["", "k"], ["", "k"], ["", "k"]],
  7: [["Целевая функция", "", 2], ["0", "r"]],
  9: [["Ограничения", "c kb", 5], ["", "kb"]],
  10: [["Коэффициенты левой части", "c k", 3], ["Левая часть", "c k"], ["Знак", "c k"], ["Правая часть", "c k"], [""], [""], ['<div class="cursor"></div>']],
  11: ["1", "4", "2", "0", "≥", "1"].map(t => [t, "c k"]),
  12: ["3", "2", "4", "0", "≥", "1"].map(t => [t, "c k"]),
  13: ["4", "2", "2", "0", "≥", "1"].map(t => [t, "c k"])
};

let html = "<colgroup>" + widths.map(w => `<col style="width:${w}px">`).join("") + "</colgroup><thead><tr><th></th>";
for (let i = 0; i < 19; i++) {
  const letter = String.fromCharCode(65 + i);
  html += `<th class="${letter === "I" ? "hot" : ""}">${letter}</th>`;
}
html += "</tr></thead><tbody>";
for (let r = 1; r <= lastRow; r++) {
  html += `<tr class="${r === 4 ? "tall" : ""}"><th class="${r === 10 ? "hot" : ""}">${r}</th>`;
  let used = 0;
  for (const [text, cls = "", span = 1] of rows[r] || []) {
    html += `<td class="${cls}" colspan="${span}">${text}</td>`;
    used += span;
  }
  html += "<td></td>".repeat(19 - used) + "</tr>";
}
const sheet = document.getElementById("sheet");
sheet.style.width = widths.reduce((a, b) => a + b, 0) + "px";
sheet.innerHTML = html + "</tbody>";
```
